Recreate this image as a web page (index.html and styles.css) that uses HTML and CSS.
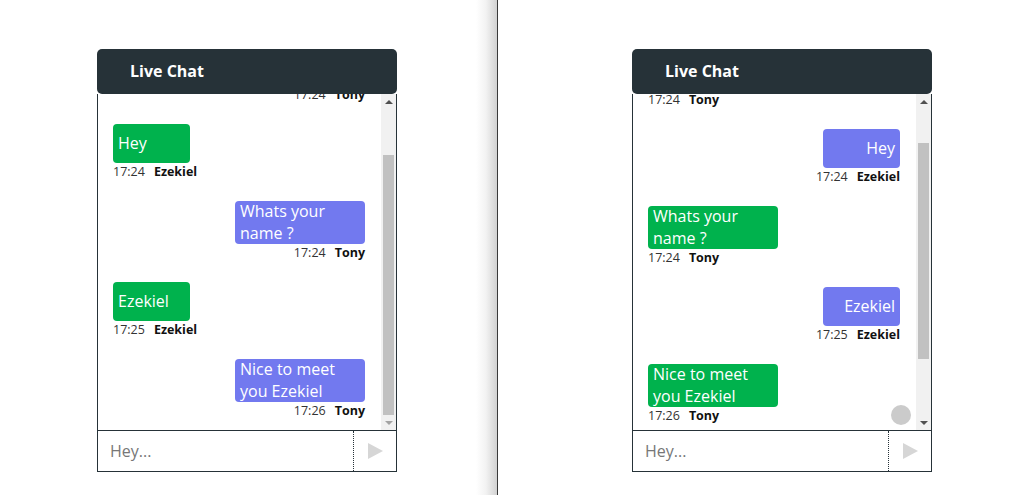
FILE: index.html
```html
<!DOCTYPE html>
<html lang="en">
<head>
<meta charset="utf-8">
<title>Live Chat</title>
<link rel="stylesheet" href="styles.css">
</head>
<body>
<div class="page">
  <section class="pane pane-left">
    <div class="chat">
      <div class="chat-header">Live Chat</div>
      <div class="chat-body">
        <div class="messages-wrap">
          <div class="messages" id="list-left">
            <div class="msg mine">
              <div class="bubble purple">Hi</div>
              <div class="meta"><span class="time">17:24</span><span class="name">Tony</span></div>
            </div>
            <div class="msg theirs">
              <div class="bubble green">Hey</div>
              <div class="meta"><span class="time">17:24</span><span class="name">Ezekiel</span></div>
            </div>
            <div class="msg mine">
              <div class="bubble purple">Whats your name ?</div>
              <div class="meta"><span class="time">17:24</span><span class="name">Tony</span></div>
            </div>
            <div class="msg theirs">
              <div class="bubble green">Ezekiel</div>
              <div class="meta"><span class="time">17:25</span><span class="name">Ezekiel</span></div>
            </div>
            <div class="msg mine">
              <div class="bubble purple">Nice to meet you Ezekiel</div>
              <div class="meta"><span class="time">17:26</span><span class="name">Tony</span></div>
            </div>
          </div>
          <div class="scrollbar">
            <div class="sb-btn"><span class="arrow-up"></span></div>
            <div class="sb-track"><div class="sb-thumb" style="margin-top: 46px; height: 260px;"></div></div>
            <div class="sb-btn"><span class="arrow-down disabled"></span></div>
          </div>
        </div>
        <div class="composer">
          <input class="composer-input" type="text" placeholder="Hey...">
          <button class="send" type="button" aria-label="Send">
            <svg width="15" height="16" viewBox="0 0 15 16"><polygon points="0,0 15,8 0,16" fill="#d6d6d6"/></svg>
          </button>
        </div>
      </div>
    </div>
  </section>
  <div class="divider"></div>
  <section class="pane pane-right">
    <div class="chat">
      <div class="chat-header">Live Chat</div>
      <div class="chat-body">
        <div class="messages-wrap">
          <div class="messages messages-extra" id="list-right">
            <div class="msg theirs">
              <div class="bubble green">Hi</div>
              <div class="meta"><span class="time">17:24</span><span class="name">Tony</span></div>
            </div>
            <div class="msg mine">
              <div class="bubble purple align-right">Hey</div>
              <div class="meta"><span class="time">17:24</span><span class="name">Ezekiel</span></div>
            </div>
            <div class="msg theirs">
              <div class="bubble green">Whats your name ?</div>
              <div class="meta"><span class="time">17:24</span><span class="name">Tony</span></div>
            </div>
            <div class="msg mine">
              <div class="bubble purple align-right">Ezekiel</div>
              <div class="meta"><span class="time">17:25</span><span class="name">Ezekiel</span></div>
            </div>
            <div class="msg theirs">
              <div class="bubble green">Nice to meet you Ezekiel</div>
              <div class="meta"><span class="time">17:26</span><span class="name">Tony</span></div>
            </div>
          </div>
          <div class="scrollbar">
            <div class="sb-btn"><span class="arrow-up"></span></div>
            <div class="sb-track"><div class="sb-thumb" style="margin-top: 34px; height: 216px;"></div></div>
            <div class="sb-btn"><span class="arrow-down"></span></div>
          </div>
          <div class="scroll-dot"></div>
        </div>
        <div class="composer">
          <input class="composer-input" type="text" placeholder="Hey...">
          <button class="send" type="button" aria-label="Send">
            <svg width="15" height="16" viewBox="0 0 15 16"><polygon points="0,0 15,8 0,16" fill="#d6d6d6"/></svg>
          </button>
        </div>
      </div>
    </div>
  </section>
</div>
<script src="script.js"></script>
</body>
</html>
```

FILE: styles.css
```css
* { box-sizing: border-box; }

html, body {
  margin: 0;
  padding: 0;
  background: #fff;
  font-family: "Open Sans", "Noto Sans", sans-serif;
}

.page {
  display: flex;
  height: 495px;
  overflow: hidden;
}

.pane {
  padding-top: 49px;
}

.pane-left {
  width: 497px;
  padding-left: 97px;
  background: linear-gradient(to right, #fff 0, #fff 476px, #f2f2f2 486px, #d2d2d2 497px);
}

.divider {
  width: 1px;
  background: #3a3a3a;
}

.pane-right {
  flex: 1;
  padding-left: 134px;
}

.chat {
  width: 300px;
}

.chat-header {
  height: 45px;
  background: #263238;
  border-radius: 5px;
  color: #fff;
  font-weight: 700;
  font-size: 16px;
  display: flex;
  align-items: center;
  padding: 0 0 2px 33px;
}

.chat-body {
  border: 1px solid #263238;
  border-top: none;
}

.messages-wrap {
  position: relative;
  display: flex;
  height: 336px;
}

.messages {
  flex: 1;
  min-width: 0;
  overflow: hidden;
  padding: 0 16px 0 15px;
}

.messages-extra::after {
  content: "";
  display: block;
  height: 83px;
}

.msg {
  display: flex;
  flex-direction: column;
  padding: 10px 0;
}

.msg.theirs { align-items: flex-start; }
.msg.mine { align-items: flex-end; }

.bubble {
  min-width: 77px;
  max-width: 130px;
  min-height: 39px;
  padding: 0 5px;
  border-radius: 4px;
  color: #fff;
  font-size: 16px;
  line-height: 21.5px;
  display: flex;
  align-items: center;
}

.bubble.green { background: #00b24d; }
.bubble.purple { background: #7279ef; }
.bubble.align-right { justify-content: flex-end; text-align: right; }

.meta {
  font-size: 12.5px;
  line-height: 18px;
  display: flex;
  gap: 9px;
}

.meta .time { color: #333; }
.meta .name { color: #111; font-weight: 700; }

.scrollbar {
  width: 15px;
  flex: none;
  background: #f1f1f1;
  display: flex;
  flex-direction: column;
}

.sb-btn {
  height: 15px;
  display: flex;
  align-items: center;
  justify-content: center;
}

.arrow-up,
.arrow-down {
  width: 0;
  height: 0;
  border-left: 4px solid transparent;
  border-right: 4px solid transparent;
}

.arrow-up { border-bottom: 4px solid #505050; }
.arrow-down { border-top: 4px solid #505050; }
.arrow-down.disabled { border-top-color: #a3a3a3; }

.sb-track {
  flex: 1;
  padding: 0 2px;
}

.sb-thumb {
  background: #c1c1c1;
}

.scroll-dot {
  position: absolute;
  right: 20px;
  bottom: 5px;
  width: 20px;
  height: 20px;
  border-radius: 50%;
  background: #cbcbcb;
}

.composer {
  display: flex;
  height: 41px;
  border-top: 1px solid #263238;
}

.composer-input {
  flex: 1;
  min-width: 0;
  border: none;
  outline: none;
  padding: 0 0 0 12px;
  font-family: "Open Sans", "Noto Sans", sans-serif;
  font-size: 16px;
  color: #333;
  background: #fff;
}

.composer-input::placeholder { color: #777; }

.send {
  width: 43px;
  border: none;
  border-left: 1px dotted #263238;
  background: #fff;
  padding: 0;
  display: flex;
  align-items: center;
  justify-content: center;
}
```

FILE: script.js
```js
document.getElementById('list-left').scrollTop = 10000;
document.getElementById('list-right').scrollTop = 52;
```
